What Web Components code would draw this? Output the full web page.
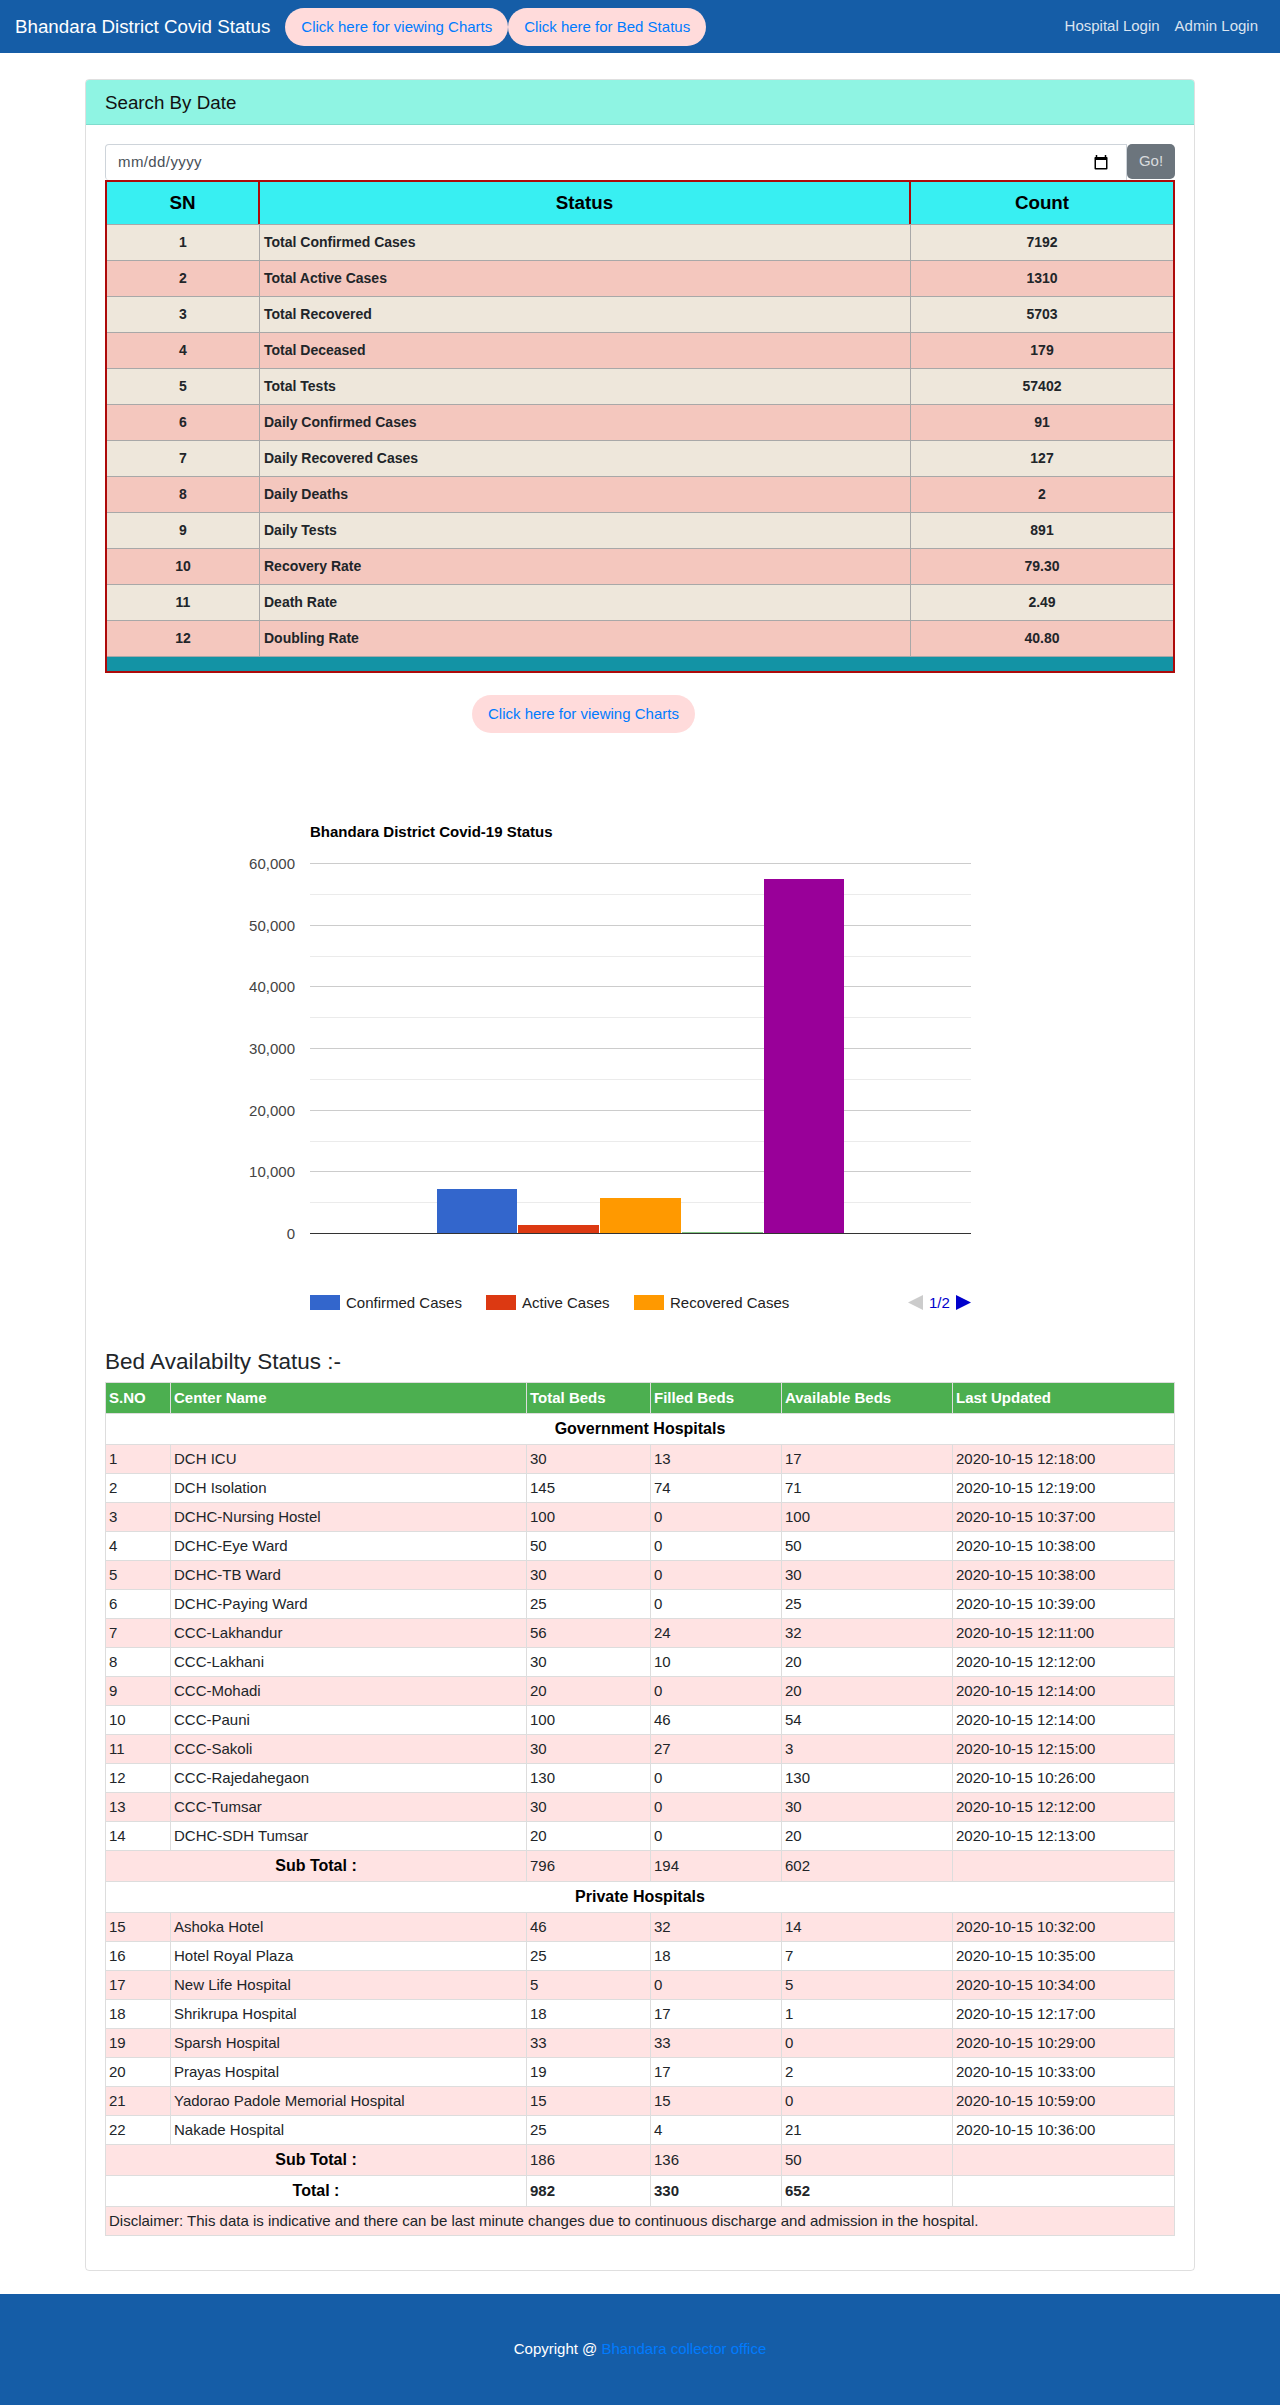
<!DOCTYPE html>
<html>
<head>
<meta charset="utf-8">
<title>Bhandara District Covid Status</title>
<style>
  html, body { margin: 0; padding: 0; background: #fff; }
  body { font-family: "Liberation Sans", Arial, sans-serif; font-size: 15px; line-height: 1.5; color: #212529; }
</style>
</head>
<body>
<site-nav></site-nav>
<page-card heading="Search By Date">
  <date-search></date-search>
  <stat-table></stat-table>
  <div style="display:flex;margin:22px 0 75px 367px"><pill-link>Click here for viewing Charts</pill-link></div>
  <status-chart></status-chart>
  <bed-table></bed-table>
</page-card>
<site-footer></site-footer>

<script>
class PillLink extends HTMLElement {
  constructor() {
    super();
    this.attachShadow({mode: 'open'}).innerHTML = `
  <style>
    :host { display: inline-block; }
    a {
      display: block;
      height: 38px;
      box-sizing: border-box;
      padding: 8px 16px;
      border-radius: 19px;
      background: #ffdbdb;
      color: #007bff;
      font-size: 15px;
      line-height: 22px;
      text-decoration: none;
      white-space: nowrap;
    }
  </style>
  <a href="#"><slot></slot></a>`;
  }
}
customElements.define('pill-link', PillLink);

class SiteNav extends HTMLElement {
  constructor() {
    super();
    this.attachShadow({mode: 'open'}).innerHTML = `
  <style>
    :host {
      display: flex;
      align-items: center;
      height: 53px;
      box-sizing: border-box;
      padding: 0 22px 0 15px;
      background: #155da7;
      color: #fff;
    }
    .brand { font-size: 18.75px; line-height: 28px; margin-right: 15px; white-space: nowrap; }
    .links { margin-left: auto; display: flex; gap: 15px; color: rgba(255,255,255,.85); }
  </style>
  <span class="brand">Bhandara District Covid Status</span>
  <pill-link>Click here for viewing Charts</pill-link>
  <pill-link>Click here for Bed Status</pill-link>
  <div class="links"><span>Hospital Login</span><span>Admin Login</span></div>`;
  }
}
customElements.define('site-nav', SiteNav);

class PageCard extends HTMLElement {
  constructor() {
    super();
    this.attachShadow({mode: 'open'}).innerHTML = `
  <style>
    :host {
      display: block;
      box-sizing: border-box;
      width: 1110px;
      margin: 26px auto 23px;
      border: 1px solid rgba(0,0,0,.125);
      border-radius: 4px;
      overflow: hidden;
    }
    header {
      height: 45px;
      box-sizing: border-box;
      padding: 11px 19px;
      background: #8ff4e3;
      border-bottom: 1px solid #7fdccd;
      font-size: 18.75px;
      line-height: 23px;
      color: #111;
    }
    main { padding: 19px 19px 34px; }
  </style>
  <header></header>
  <main><slot></slot></main>`;
    this.shadowRoot.querySelector('header').textContent = this.getAttribute('heading');
  }
}
customElements.define('page-card', PageCard);

class DateSearch extends HTMLElement {
  constructor() {
    super();
    this.attachShadow({mode: 'open'}).innerHTML = `
  <style>
    :host { display: flex; height: 36px; }
    .field {
      flex: 1;
      display: flex;
      align-items: center;
      justify-content: space-between;
      box-sizing: border-box;
      height: 36px;
      padding: 0 18px 0 12px;
      border: 1px solid #ced4da;
      border-bottom: 0;
      border-radius: 4px 0 0 4px;
      color: #495057;
      letter-spacing: .4px;
    }
    button {
      width: 48px;
      height: 35px;
      border: 0;
      border-radius: 5px;
      background: #6c757d;
      color: #d8dbdd;
      font: 15px "Liberation Sans", Arial, sans-serif;
      padding: 0 0 2px;
    }
    svg { display: block; margin-bottom: 1px; }
  </style>
  <div class="field">
    <span>mm/dd/yyyy</span>
    <svg width="14" height="15" viewBox="0 0 14 15">
      <path d="M2.500 0v2M11.500 0v2" stroke="#000" stroke-width="1.500"/>
      <path d="M0.500 3.500a1 1 0 0 1 1-1.500h11a1 1 0 0 1 1 1.500v10a1 1 0 0 1-1 1h-11a1 1 0 0 1-1-1zM2 5v8h10v-8z" fill="#000" fill-rule="evenodd"/>
    </svg>
  </div>
  <button>Go!</button>`;
  }
}
customElements.define('date-search', DateSearch);

const STATS = [
  ['Total Confirmed Cases', '7192'], ['Total Active Cases', '1310'], ['Total Recovered', '5703'],
  ['Total Deceased', '179'], ['Total Tests', '57402'], ['Daily Confirmed Cases', '91'],
  ['Daily Recovered Cases', '127'], ['Daily Deaths', '2'], ['Daily Tests', '891'],
  ['Recovery Rate', '79.30'], ['Death Rate', '2.49'], ['Doubling Rate', '40.80']
];

class StatTable extends HTMLElement {
  constructor() {
    super();
    const rows = STATS.map((s, i) => `<tr class="${i % 2 ? 'odd' : 'even'}"><td class="c">${i + 1}</td><td>${s[0]}</td><td class="c">${s[1]}</td></tr>`).join('');
    this.attachShadow({mode: 'open'}).innerHTML = `
  <style>
    :host { display: block; }
    table {
      width: 100%;
      box-sizing: border-box;
      table-layout: fixed;
      border-collapse: separate;
      border-spacing: 0;
      border: 2px solid #ad0a0a;
      font-size: 14px;
      font-weight: 700;
    }
    th {
      height: 42px;
      padding: 0;
      background: #38eff2;
      color: #000;
      font-size: 18.75px;
      border-right: 2px solid #ad0a0a;
    }
    th:last-child, td:last-child { border-right: 0; }
    td {
      height: 35px;
      padding: 0 4px;
      border-top: 1px solid #a8a8a8;
      border-right: 1px solid #a8a8a8;
    }
    .c { text-align: center; }
    .even td { background: #eee7db; }
    .odd td { background: #f4c7be; }
    .bar td { height: 14px; padding: 0; background: #1393a5; border-right: 0; }
  </style>
  <table>
    <colgroup><col style="width:153px"><col style="width:651px"><col></colgroup>
    <tr><th>SN</th><th>Status</th><th>Count</th></tr>
    ${rows}
    <tr class="bar"><td colspan="3"></td></tr>
  </table>`;
  }
}
customElements.define('stat-table', StatTable);

class StatusChart extends HTMLElement {
  constructor() {
    super();
    const axisY = 1233 - 808, step = 370 / 6;
    let grid = '';
    for (let i = 0; i <= 11; i++) {
      const y = Math.round(axisY - (i + 1) * step / 2) + .5;
      grid += `<line x1="205" x2="866" y1="${y}" y2="${y}" stroke="${i % 2 ? '#ccc' : '#ebebeb'}"/>`;
    }
    const labels = ['0', '10,000', '20,000', '30,000', '40,000', '50,000', '60,000']
      .map((t, i) => `<text x="190" y="${axisY - i * step + 6}" text-anchor="end" fill="#444" font-size="15">${t}</text>`).join('');
    const bars = [[332, 80, 7192, '#3366cc'], [413, 81, 1310, '#dc3912'], [495, 81, 5703, '#ff9900'], [577, 81, 179, '#84c984'], [659, 80, 57402, '#990099']]
      .map(b => { const h = Math.round(b[2] / 60000 * 370); return `<rect x="${b[0]}" y="${axisY - h}" width="${b[1]}" height="${h}" fill="${b[3]}"/>`; }).join('');
    this.attachShadow({mode: 'open'}).innerHTML = `
  <style>
    :host { display: block; height: 540px; }
    svg { display: block; font-family: "Liberation Sans", Arial, sans-serif; }
  </style>
  <svg width="1070" height="540" viewBox="0 0 1070 540">
    <text x="205" y="29" font-size="15" font-weight="700" fill="#000">Bhandara District Covid-19 Status</text>
    ${grid}
    ${labels}
    ${bars}
    <line x1="205" x2="866" y1="${axisY + .5}" y2="${axisY + .5}" stroke="#333"/>
    <rect x="205" y="487" width="30" height="15" fill="#3366cc"/>
    <text x="241" y="500" font-size="15" fill="#222">Confirmed Cases</text>
    <rect x="381" y="487" width="30" height="15" fill="#dc3912"/>
    <text x="417" y="500" font-size="15" fill="#222">Active Cases</text>
    <rect x="529" y="487" width="30" height="15" fill="#ff9900"/>
    <text x="565" y="500" font-size="15" fill="#222">Recovered Cases</text>
    <path d="M818 487v15l-15-7.500z" fill="#ccc"/>
    <text x="824" y="500" font-size="15" fill="#0000cc">1/2</text>
    <path d="M851 487v15l15-7.500z" fill="#0000cc"/>
  </svg>`;
  }
}
customElements.define('status-chart', StatusChart);

const GOV = [
  ['DCH ICU', 30, 13, 17, '12:18:00'], ['DCH Isolation', 145, 74, 71, '12:19:00'], ['DCHC-Nursing Hostel', 100, 0, 100, '10:37:00'],
  ['DCHC-Eye Ward', 50, 0, 50, '10:38:00'], ['DCHC-TB Ward', 30, 0, 30, '10:38:00'], ['DCHC-Paying Ward', 25, 0, 25, '10:39:00'],
  ['CCC-Lakhandur', 56, 24, 32, '12:11:00'], ['CCC-Lakhani', 30, 10, 20, '12:12:00'], ['CCC-Mohadi', 20, 0, 20, '12:14:00'],
  ['CCC-Pauni', 100, 46, 54, '12:14:00'], ['CCC-Sakoli', 30, 27, 3, '12:15:00'], ['CCC-Rajedahegaon', 130, 0, 130, '10:26:00'],
  ['CCC-Tumsar', 30, 0, 30, '12:12:00'], ['DCHC-SDH Tumsar', 20, 0, 20, '12:13:00']
];
const PRIV = [
  ['Ashoka Hotel', 46, 32, 14, '10:32:00'], ['Hotel Royal Plaza', 25, 18, 7, '10:35:00'], ['New Life Hospital', 5, 0, 5, '10:34:00'],
  ['Shrikrupa Hospital', 18, 17, 1, '12:17:00'], ['Sparsh Hospital', 33, 33, 0, '10:29:00'], ['Prayas Hospital', 19, 17, 2, '10:33:00'],
  ['Yadorao Padole Memorial Hospital', 15, 15, 0, '10:59:00'], ['Nakade Hospital', 25, 4, 21, '10:36:00']
];

class BedTable extends HTMLElement {
  constructor() {
    super();
    const row = (r, n) => `<tr class="${n % 2 ? 'pink' : ''}"><td>${n}</td><td>${r[0]}</td><td>${r[1]}</td><td>${r[2]}</td><td>${r[3]}</td><td>2020-10-15 ${r[4]}</td></tr>`;
    const total = (label, a, b, c, cls) => `<tr class="tot ${cls}"><th colspan="2">${label}</th><td>${a}</td><td>${b}</td><td>${c}</td><td></td></tr>`;
    this.attachShadow({mode: 'open'}).innerHTML = `
  <style>
    :host { display: block; }
    h4 { margin: 0 0 7px; font-size: 22.5px; font-weight: 400; line-height: 27px; }
    table { width: 100%; table-layout: fixed; border-collapse: collapse; font-size: 15px; }
    td, th { border: 1px solid #ddd; padding: 0 3px; height: 28px; line-height: 20px; text-align: left; }
    .head th { height: 30px; background: #4caf50; color: #fff; font-size: 15px; }
    .sec th, .tot th { height: 30px; text-align: center; color: #000; font-size: 16px; }
    .tot td { height: 30px; }
    .grand td { font-weight: 700; }
    .pink td, .pink th { background: #ffe3e3; }
  </style>
  <h4>Bed Availabilty Status :-</h4>
  <table>
    <colgroup><col style="width:65px"><col style="width:356px"><col style="width:124px"><col style="width:131px"><col style="width:171px"><col></colgroup>
    <tr class="head"><th>S.NO</th><th>Center Name</th><th>Total Beds</th><th>Filled Beds</th><th>Available Beds</th><th>Last Updated</th></tr>
    <tr class="sec"><th colspan="6">Government Hospitals</th></tr>
    ${GOV.map((r, i) => row(r, i + 1)).join('')}
    ${total('Sub Total :', 796, 194, 602, 'pink')}
    <tr class="sec"><th colspan="6">Private Hospitals</th></tr>
    ${PRIV.map((r, i) => row(r, i + 15)).join('')}
    ${total('Sub Total :', 186, 136, 50, 'pink')}
    ${total('Total :', 982, 330, 652, 'grand')}
    <tr class="pink"><td colspan="6">Disclaimer: This data is indicative and there can be last minute changes due to continuous discharge and admission in the hospital.</td></tr>
  </table>`;
  }
}
customElements.define('bed-table', BedTable);

class SiteFooter extends HTMLElement {
  constructor() {
    super();
    this.attachShadow({mode: 'open'}).innerHTML = `
  <style>
    :host {
      display: flex;
      justify-content: center;
      align-items: center;
      height: 112px;
      box-sizing: border-box;
      padding-bottom: 2px;
      background: #155da7;
      color: #fff;
      font-size: 15px;
    }
    a { color: #007bff; text-decoration: none; }
  </style>
  <span>Copyright @ <a href="#">Bhandara collector office</a></span>`;
  }
}
customElements.define('site-footer', SiteFooter);
</script>
</body>
</html>
